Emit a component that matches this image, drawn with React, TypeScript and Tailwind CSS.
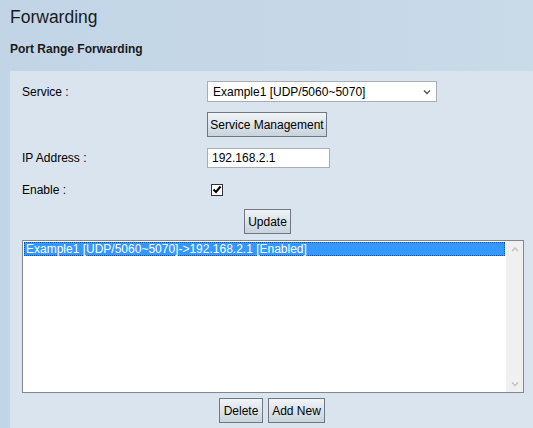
import React from "react";

const font = { fontFamily: '"Liberation Sans", Arial, sans-serif' };

function Btn({ label, className = "" }: { label: string; className?: string }) {
  return (
    <button
      className={`h-[25px] whitespace-nowrap border border-[#6f7780] bg-gradient-to-b from-[#f1f4f7] to-[#c9d3dc] px-0 text-[12px] leading-none text-black ${className}`}
    >
      {label}
    </button>
  );
}

function Chevron({ up = false, color = "#8a8a8a" }: { up?: boolean; color?: string }) {
  return (
    <svg width="8" height="6" viewBox="0 0 8 6">
      <path
        d={up ? "M1 5 L4 2 L7 5" : "M1 1.5 L4 4.5 L7 1.5"}
        fill="none"
        stroke={color}
        strokeWidth="1.4"
      />
    </svg>
  );
}

export default function App() {
  return (
    <div
      style={font}
      className="flex h-[428px] w-[533px] flex-col overflow-hidden bg-gradient-to-r from-[#c2d5e6] to-[#c9dae9] text-black"
    >
      <h1 className="pl-[10px] pt-[6px] text-[17.5px] leading-[22px] text-[#1a1a1a]">Forwarding</h1>
      <h2 className="pl-[10px] pt-[14px] text-[12px] font-bold leading-[14px] text-[#1a1a1a]">
        Port Range Forwarding
      </h2>

      <div className="ml-[10px] mt-[15px] flex-1 bg-[#d9e4ef] pl-[12px] pr-[9px] pt-[10px]">
        {/* service */}
        <div className="flex h-[21px] items-center">
          <span className="w-[185px] text-[12px]">Service :</span>
          <div className="flex h-[21px] w-[230px] items-center justify-between border border-[#a9aeb3] bg-white pl-[5px] pr-[5px] text-[12px]">
            <span>Example1 [UDP/5060~5070]</span>
            <Chevron color="#555" />
          </div>
        </div>

        <div className="ml-[185px] mt-[10px] flex">
          <Btn label="Service Management" className="w-[120px]" />
        </div>

        {/* ip */}
        <div className="mt-[11px] flex h-[20px] items-center">
          <span className="w-[185px] text-[12px]">IP Address :</span>
          <div className="flex h-[20px] w-[123px] items-center border border-[#a9aeb3] bg-white pl-[4px] text-[12px]">
            192.168.2.1
          </div>
        </div>

        {/* enable */}
        <div className="mt-[15px] flex h-[13px] items-center">
          <span className="w-[189px] text-[12px]">Enable :</span>
          <div className="flex h-[12px] w-[12px] items-center justify-center border border-[#333] bg-white">
            <svg width="10" height="9" viewBox="0 0 10 9">
              <path d="M1.5 4.5 L4 7 L8.5 1.5" fill="none" stroke="#000" strokeWidth="2" />
            </svg>
          </div>
        </div>

        <div className="mt-[13px] flex pl-[222px]">
          <Btn label="Update" className="w-[47px]" />
        </div>

        {/* list */}
        <div className="mt-[6px] flex h-[153px] w-[502px] border border-[#80878f] bg-white">
          <div className="flex-1 p-px">
            <div className="h-[14px] border border-dotted border-[#0b4fa8] bg-[#3399ff] pl-[1px] text-[12px] leading-[12px] text-white">
              Example1 [UDP/5060~5070]-&gt;192.168.2.1 [Enabled]
            </div>
          </div>
          <div className="flex w-[17px] flex-col items-center justify-between bg-[#f0f0f0] py-[5px]">
            <Chevron up color="#c2c2c2" />
            <Chevron color="#c2c2c2" />
          </div>
        </div>

        <div className="mt-[5px] flex gap-[5px] pl-[197px]">
          <Btn label="Delete" className="w-[44px]" />
          <Btn label="Add New" className="w-[57px]" />
        </div>
      </div>
    </div>
  );
}
